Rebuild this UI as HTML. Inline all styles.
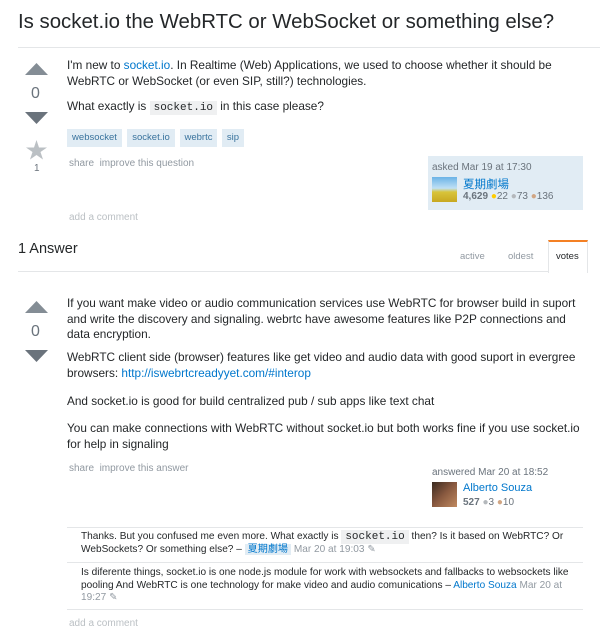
<!DOCTYPE html>
<html><head><meta charset="utf-8"><style>
*{margin:0;padding:0;box-sizing:border-box}
body{width:600px;height:635px;background:#fff;font-family:"Liberation Sans","Noto Sans CJK SC",sans-serif;color:#242729;position:relative;overflow:hidden}
.a{position:absolute;white-space:nowrap}
.t{font-size:11.8px;line-height:15.5px;color:#242729}
.blue{color:#0077cc}
.g{color:#9199a1}
code{font-family:"Liberation Mono",monospace;background:#eff0f1;padding:1px 4px;font-size:11px}
.tag{position:absolute;top:129px;height:18px;background:#e1ecf4;color:#39739d;font-size:9.5px;line-height:18px;text-align:center}
.ln{position:absolute;height:1px;background:#e4e6e8}
.c{font-size:10.1px;line-height:12.5px;color:#242729}
</style></head><body>
<div class="a" style="left:18px;top:11px;font-size:20.4px;color:#242729">Is socket.io the WebRTC or WebSocket or something else?</div>
<div class="ln" style="left:18px;top:47px;width:582px"></div>

<svg class="a" style="left:24px;top:62px" width="26" height="110"><polygon points="1,13 12.5,1 24,13" fill="#848d95"/><polygon points="1,50 24,50 12.5,62" fill="#6a737c"/><polygon points="12.5,78 15,85.5 23,85.5 16.5,90 19,97.5 12.5,93 6,97.5 8.5,90 2,85.5 10,85.5" fill="#bbc0c4"/></svg>
<div class="a" style="left:31px;top:85px;font-size:16px;color:#6a737c">0</div>
<div class="a" style="left:34px;top:163px;font-size:10px;color:#6a737c">1</div>

<div class="a t" style="left:67px;top:58px">I'm new to <span class="blue">socket.io</span>. In Realtime (Web) Applications, we used to choose whether it should be<br>WebRTC or WebSocket (or even SIP, still?) technologies.</div>
<div class="a t" style="left:67px;top:99px">What exactly is <code>socket.io</code> in this case please?</div>
<div class="tag" style="left:67px;width:55px">websocket</div>
<div class="tag" style="left:127px;width:48px">socket.io</div>
<div class="tag" style="left:180px;width:37px">webrtc</div>
<div class="tag" style="left:222px;width:22px">sip</div>
<div class="a g" style="left:69px;top:158px;font-size:10px">share&nbsp; improve this question</div>
<div class="a" style="left:428px;top:156px;width:155px;height:54px;background:#e1ecf4"></div>
<div class="a" style="left:432px;top:162px;font-size:10px;color:#6a737c">asked Mar 19 at 17:30</div>
<div class="a" style="left:432px;top:177px;width:25px;height:25px;background:linear-gradient(#6bb3e6,#bfe0f5 45%,#d8c43a 60%,#c8a820)"></div>
<div class="a blue" style="left:463px;top:176px;font-size:11.5px">夏期劇場</div>
<div class="a" style="left:463px;top:191px;font-size:10px;color:#6a737c"><b style="color:#6a737c">4,629</b> <span style="color:#ffcc01">●</span>22 <span style="color:#b4b8bc">●</span>73 <span style="color:#d1a684">●</span>136</div>
<div class="a" style="left:69px;top:212px;font-size:10px;color:#bbc0c4">add a comment</div>

<div class="a" style="left:18px;top:241px;font-size:14.5px;color:#242729">1 Answer</div>
<div class="ln" style="left:18px;top:271px;width:530px"></div>
<div class="a" style="left:548px;top:240px;width:40px;height:33px;border:1px solid #e4e6e8;border-top:2px solid #f48024;border-bottom:none;background:#fff"></div>
<div class="a" style="left:460px;top:251px;font-size:9.5px;color:#9199a1">active</div>
<div class="a" style="left:508px;top:251px;font-size:9.5px;color:#9199a1">oldest</div>
<div class="a" style="left:556px;top:251px;font-size:9.5px;color:#242729">votes</div>

<svg class="a" style="left:24px;top:300px" width="26" height="64"><polygon points="1,13 12.5,1 24,13" fill="#848d95"/><polygon points="1,50 24,50 12.5,62" fill="#6a737c"/></svg>
<div class="a" style="left:31px;top:323px;font-size:16px;color:#6a737c">0</div>

<div class="a t" style="left:67px;top:296px">If you want make video or audio communication services use WebRTC for browser build in suport<br>and write the discovery and signaling. webrtc have awesome features like P2P connections and<br>data encryption.</div>
<div class="a t" style="left:67px;top:350px">WebRTC client side (browser) features like get video and audio data with good suport in evergree<br>browsers: <span class="blue">http://iswebrtcreadyyet.com/#interop</span></div>
<div class="a t" style="left:67px;top:394px">And socket.io is good for build centralized pub / sub apps like text chat</div>
<div class="a t" style="left:67px;top:421px">You can make connections with WebRTC without socket.io but both works fine if you use socket.io<br>for help in signaling</div>
<div class="a g" style="left:69px;top:463px;font-size:10px">share&nbsp; improve this answer</div>
<div class="a" style="left:432px;top:467px;font-size:10px;color:#6a737c">answered Mar 20 at 18:52</div>
<div class="a" style="left:432px;top:482px;width:25px;height:25px;background:linear-gradient(135deg,#3a2a20,#8a5a40 50%,#c08a60)"></div>
<div class="a blue" style="left:463px;top:482px;font-size:11px">Alberto Souza</div>
<div class="a" style="left:463px;top:497px;font-size:10px;color:#6a737c"><b>527</b> <span style="color:#b4b8bc">●</span>3 <span style="color:#d1a684">●</span>10</div>

<div class="ln" style="left:67px;top:527px;width:516px"></div>
<div class="a c" style="left:81px;top:531px">Thanks. But you confused me even more. What exactly is <code style="font-size:11px">socket.io</code> then? Is it based on WebRTC? Or<br>WebSockets? Or something else? – <span class="blue" style="background:#e1ecf4;padding:0 3px">夏期劇場</span> <span class="g">Mar 20 at 19:03 ✎</span></div>
<div class="ln" style="left:67px;top:562px;width:516px"></div>
<div class="a c" style="left:81px;top:567px">Is diferente things, socket.io is one node.js module for work with websockets and fallbacks to websockets like<br>pooling And WebRTC is one technology for make video and audio comunications – <span class="blue">Alberto Souza</span> <span class="g">Mar 20 at</span><br><span class="g">19:27 ✎</span></div>
<div class="ln" style="left:67px;top:609px;width:516px"></div>
<div class="a" style="left:69px;top:618px;font-size:10px;color:#bbc0c4">add a comment</div>
</body></html>
